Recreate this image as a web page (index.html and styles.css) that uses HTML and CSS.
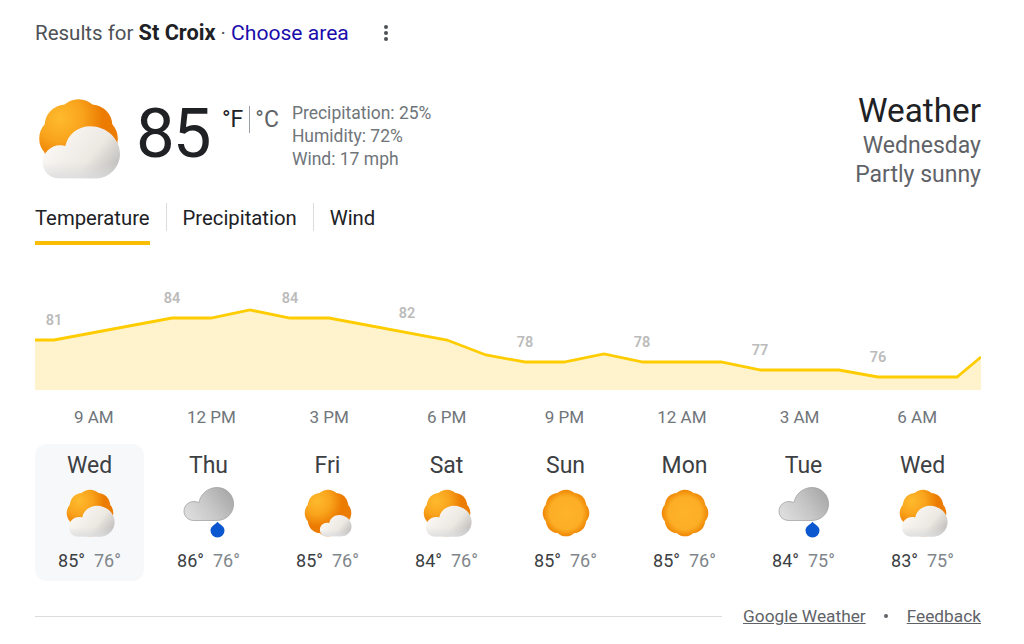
FILE: index.html
```html
<!DOCTYPE html>
<html lang="en">
<head>
<meta charset="utf-8">
<title>Weather</title>
<link rel="stylesheet" href="styles.css">
</head>
<body>
<svg class="defs" aria-hidden="true">
  <defs>
    <radialGradient id="sunFull" gradientUnits="userSpaceOnUse" cx="24" cy="24" r="24">
      <stop offset="0" stop-color="#fdb32a"/><stop offset=".68" stop-color="#fcae26"/><stop offset="1" stop-color="#ee8200"/>
    </radialGradient>
    <radialGradient id="sunPart" gradientUnits="userSpaceOnUse" cx="13" cy="12" r="30">
      <stop offset="0" stop-color="#feba2e"/><stop offset=".45" stop-color="#f9a41c"/><stop offset=".85" stop-color="#ec7b02"/>
    </radialGradient>
    <linearGradient id="cloudFill" gradientUnits="userSpaceOnUse" x1="12" y1="18" x2="46" y2="46">
      <stop offset="0" stop-color="#fbf9f6"/><stop offset=".58" stop-color="#ece8e2"/><stop offset="1" stop-color="#b9b8b7"/>
    </linearGradient>
    <linearGradient id="cloudBase" gradientUnits="userSpaceOnUse" x1="0" y1="38" x2="0" y2="48">
      <stop offset="0" stop-color="#dcdddf" stop-opacity="0"/><stop offset="1" stop-color="#dcdddf" stop-opacity=".85"/>
    </linearGradient>
    <linearGradient id="rainFill" gradientUnits="userSpaceOnUse" x1="6" y1="30" x2="44" y2="3">
      <stop offset="0" stop-color="#dcdcdc"/><stop offset=".5" stop-color="#c6c6c6"/><stop offset="1" stop-color="#a9a9a9"/>
    </linearGradient>
    <g id="blob">
      <circle cx="24" cy="13" r="12.3"/>
      <circle cx="31.78" cy="16.22" r="12.3"/>
      <circle cx="35" cy="24" r="12.3"/>
      <circle cx="31.78" cy="31.78" r="12.3"/>
      <circle cx="24" cy="35" r="12.3"/>
      <circle cx="16.22" cy="31.78" r="12.3"/>
      <circle cx="13" cy="24" r="12.3"/>
      <circle cx="16.22" cy="16.22" r="12.3"/>
    </g>
    <path id="puff" d="M12.5 47.6C6.5 47.6 2.8 43 2.8 38C2.8 32.5 7.5 28 13 28C14.2 28 15.2 28.1 16.2 28.5C17.6 21.5 23.7 16.7 31 16.7C40.5 16.7 48.6 24 48.6 33C48.6 41 42 47.6 34 47.6Z"/>
    <symbol id="partly" viewBox="0 0 48 48" overflow="visible">
      <use href="#blob" fill="url(#sunPart)"/>
      <use href="#puff" fill="url(#cloudFill)"/>
      <use href="#puff" fill="url(#cloudBase)"/>
    </symbol>
    <symbol id="mostly" viewBox="0 0 48 48" overflow="visible">
      <use href="#blob" fill="url(#sunPart)"/>
      <g transform="translate(14 14.5) scale(.69)">
        <use href="#puff" fill="url(#cloudFill)"/>
        <use href="#puff" fill="url(#cloudBase)"/>
      </g>
    </symbol>
    <symbol id="sunny" viewBox="0 0 48 48" overflow="visible">
      <use href="#blob" fill="url(#sunFull)"/>
    </symbol>
    <symbol id="rain" viewBox="0 0 48 48" overflow="visible">
      <path d="M9 31.5C3 31.5 -1 27.5 -1 22C-1 16.5 3.5 12.5 9 12.5C11 12.5 12.5 13 14 13.5C15.5 5 23 -1.5 32 -1.5C41.5 -1.5 48.6 6 48.6 15C48.6 24.5 41 31.5 32 31.5Z" fill="url(#rainFill)" stroke="#9b9b9b" stroke-width=".7"/>
      <path d="M32.5 32.8C34.500 35.6 39.5 37 39.5 41.5A7 7 0 0 1 25.5 41.5C25.5 37 30.5 35.6 32.5 32.8Z" fill="#0b57d0"/>
    </symbol>
  </defs>
</svg>

<main class="page">
  <header class="results">
    <span>Results for <b class="place">St Croix</b> · <a class="choose" href="#">Choose area</a></span>
    <svg class="kebab" width="6" height="18" viewBox="0 0 6 18" aria-hidden="true"><circle cx="3" cy="3" r="2"/><circle cx="3" cy="9" r="2"/><circle cx="3" cy="15" r="2"/></svg>
  </header>

  <section class="summary">
    <svg class="now-icon"><use href="#partly"/></svg>
    <div class="temp">85</div>
    <div class="units"><span class="unit-f">°F</span><span class="unit-sep"></span><span class="unit-c">°C</span></div>
    <div class="details">
      <div>Precipitation: 25%</div>
      <div>Humidity: 72%</div>
      <div>Wind: 17 mph</div>
    </div>
    <div class="title">
      <div class="title-main">Weather</div>
      <div class="title-sub">Wednesday</div>
      <div class="title-sub">Partly sunny</div>
    </div>
  </section>

  <nav class="tabs">
    <div class="tab tab-active">Temperature</div>
    <div class="tab">Precipitation</div>
    <div class="tab">Wind</div>
  </nav>

  <svg class="chart" viewBox="0 0 946 115" aria-hidden="true">
    <path class="area" d="M0 65H19L137 43H176L215 35L255 43H294L412 65L451 80L490 87H529L569 79L608 87H686L726 95H804L843 102H922L946 82V115H0Z"/>
    <path class="line" d="M0 65H19L137 43H176L215 35L255 43H294L412 65L451 80L490 87H529L569 79L608 87H686L726 95H804L843 102H922L946 82"/>
    <text class="lbl" x="19" y="50">81</text>
    <text class="lbl" x="137" y="27.500">84</text>
    <text class="lbl" x="255" y="27.500">84</text>
    <text class="lbl" x="372" y="43">82</text>
    <text class="lbl" x="490" y="72">78</text>
    <text class="lbl" x="607" y="72">78</text>
    <text class="lbl" x="725" y="80">77</text>
    <text class="lbl" x="843" y="87">76</text>
  </svg>

  <div class="times">
    <span>9 AM</span><span>12 PM</span><span>3 PM</span><span>6 PM</span><span>9 PM</span><span>12 AM</span><span>3 AM</span><span>6 AM</span>
  </div>

  <div class="days">
    <div class="day day-active"><div class="day-name">Wed</div><svg class="day-icon"><use href="#partly"/></svg><div class="day-temp"><span class="hi">85°</span><span class="lo">76°</span></div></div>
    <div class="day"><div class="day-name">Thu</div><svg class="day-icon"><use href="#rain"/></svg><div class="day-temp"><span class="hi">86°</span><span class="lo">76°</span></div></div>
    <div class="day"><div class="day-name">Fri</div><svg class="day-icon"><use href="#mostly"/></svg><div class="day-temp"><span class="hi">85°</span><span class="lo">76°</span></div></div>
    <div class="day"><div class="day-name">Sat</div><svg class="day-icon"><use href="#partly"/></svg><div class="day-temp"><span class="hi">84°</span><span class="lo">76°</span></div></div>
    <div class="day"><div class="day-name">Sun</div><svg class="day-icon"><use href="#sunny"/></svg><div class="day-temp"><span class="hi">85°</span><span class="lo">76°</span></div></div>
    <div class="day"><div class="day-name">Mon</div><svg class="day-icon"><use href="#sunny"/></svg><div class="day-temp"><span class="hi">85°</span><span class="lo">76°</span></div></div>
    <div class="day"><div class="day-name">Tue</div><svg class="day-icon"><use href="#rain"/></svg><div class="day-temp"><span class="hi">84°</span><span class="lo">75°</span></div></div>
    <div class="day"><div class="day-name">Wed</div><svg class="day-icon"><use href="#partly"/></svg><div class="day-temp"><span class="hi">83°</span><span class="lo">75°</span></div></div>
  </div>

  <footer class="foot">
    <div class="foot-rule"></div>
    <a class="foot-link" href="#">Google Weather</a>
    <span class="foot-dot"></span>
    <a class="foot-link" href="#">Feedback</a>
  </footer>
</main>
</body>
</html>
```

FILE: styles.css
```css
* { box-sizing: border-box; }
html, body { margin: 0; background: #fff; }
body { font-family: Roboto, "Liberation Sans", sans-serif; color: #1f1f1f; overflow: hidden; }
.defs { display: block; width: 0; height: 0; }
.page { width: 1024px; height: 644px; padding: 20px 43px 0 35px; }

.results { display: flex; align-items: center; height: 26px; font-size: 20.5px; line-height: 26px; color: #4d5156; }
.place { color: #202124; font-weight: 700; font-size: 21.7px; }
.choose { color: #1a0dab; text-decoration: none; font-size: 21.1px; }
.kebab { margin-left: 34px; fill: #4d5156; }

.summary { display: flex; align-items: flex-start; margin-top: 52px; height: 104px; }
.now-icon { width: 81px; height: 81px; flex: none; margin: 0 0 0 3px; overflow: visible; }
.temp { margin-left: 17px; font-size: 69px; letter-spacing: -2px; line-height: 72px; color: #202124; width: 86px; flex: none; }
.units { display: flex; align-items: flex-start; font-size: 23px; line-height: 26px; color: #202124; margin-top: 9px; }
.unit-sep { width: 1px; height: 27px; background: #9aa0a6; margin: -1px 5px 0 6px; }
.unit-c { color: #5f6368; }
.details { margin-left: 13px; font-size: 17.5px; line-height: 23px; color: #70757a; margin-top: 4px; white-space: nowrap; }
.title { margin-left: auto; text-align: right; color: #5f6368; margin-top: -6px; }
.title-main { font-size: 33.3px; line-height: 38px; color: #202124; }
.title-sub { font-size: 23px; line-height: 29px; }
.title-main + .title-sub { margin-top: 1px; }

.tabs { display: flex; height: 43px; margin-top: 1px; font-size: 20.3px; line-height: 28px; color: #202124; }
.tab { position: relative; height: 28px; padding: 1px 16px 0 16px; border-left: 1px solid #dadce0; }
.tab:first-child { padding-left: 0; border-left: 0; }
.tab-active::after { content: ""; position: absolute; left: 0; right: 16px; top: 38px; height: 4px; background: #fbbc04; }

.chart { display: block; width: 946px; height: 115px; margin-top: 29px; }
.area { fill: #fef3cd; }
.line { fill: none; stroke: #ffcc00; stroke-width: 2.8; }
.lbl { font-family: Roboto, sans-serif; font-size: 14.5px; font-weight: 600; fill: #bbb; text-anchor: middle; }

.times { display: grid; grid-template-columns: repeat(8, 1fr); width: 941px; margin-top: 16px; font-size: 17px; line-height: 22px; color: #70757a; text-align: center; }

.days { display: flex; gap: 10px; margin-top: 16px; }
.day { width: 109px; height: 137px; padding-top: 8px; border-radius: 12px; display: flex; flex-direction: column; align-items: center; }
.day-active { background: #f7f8fa; }
.day-name { font-size: 23px; line-height: 28px; color: #3c4043; }
.day-icon { display: block; width: 48px; height: 48px; margin-top: 9px; overflow: visible; }
.day-temp { display: flex; gap: 9px; margin-top: 13px; font-size: 18px; line-height: 22px; }
.hi { color: #3c4043; }
.lo { color: #80868b; }

.foot { display: flex; align-items: center; height: 24px; margin-top: 23px; font-size: 17.3px; white-space: nowrap; }
.foot-rule { width: 687px; height: 1px; background: #dadce0; margin-right: 21px; flex: none; }
.foot-link { color: #5f6368; text-decoration: underline; line-height: 24px; }
.foot-dot { width: 4px; height: 4px; border-radius: 50%; background: #5f6368; margin: 0 19px 0 18px; flex: none; }
```
